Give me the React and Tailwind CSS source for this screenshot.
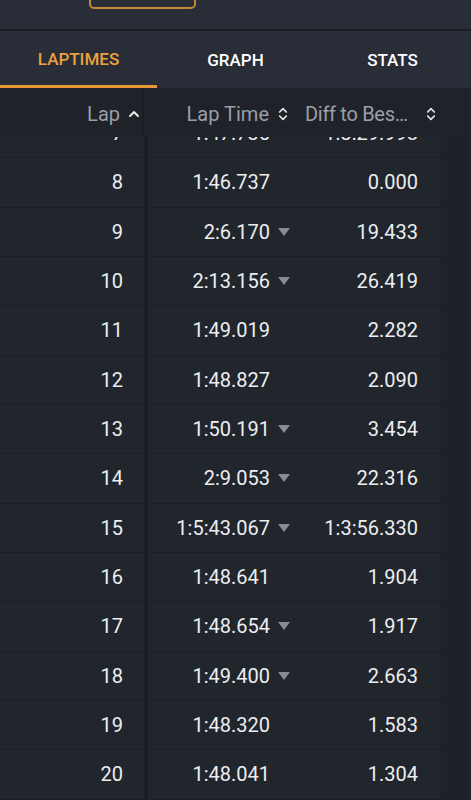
import { ChevronUp, ChevronsUpDown } from 'lucide-react';

const laps = [
  { lap: 7, time: '1:47.735', diff: '1:3:29.998' },
  { lap: 8, time: '1:46.737', diff: '0.000' },
  { lap: 9, time: '2:6.170', diff: '19.433', slower: true },
  { lap: 10, time: '2:13.156', diff: '26.419', slower: true },
  { lap: 11, time: '1:49.019', diff: '2.282' },
  { lap: 12, time: '1:48.827', diff: '2.090' },
  { lap: 13, time: '1:50.191', diff: '3.454', slower: true },
  { lap: 14, time: '2:9.053', diff: '22.316', slower: true },
  { lap: 15, time: '1:5:43.067', diff: '1:3:56.330', slower: true },
  { lap: 16, time: '1:48.641', diff: '1.904' },
  { lap: 17, time: '1:48.654', diff: '1.917', slower: true },
  { lap: 18, time: '1:49.400', diff: '2.663', slower: true },
  { lap: 19, time: '1:48.320', diff: '1.583' },
  { lap: 20, time: '1:48.041', diff: '1.304' },
  { lap: 21, time: '1:48.512', diff: '1.775' },
];

function Triangle() {
  return (
    <svg width="12" height="8" viewBox="0 0 12 8" className="ml-[8px]">
      <path d="M0 0 H12 L6 8 Z" fill="#878c93" />
    </svg>
  );
}

export default function App() {
  return (
    <div
      className="w-[471px] h-[800px] overflow-hidden bg-[#1e2127] flex flex-col"
      style={{ fontFamily: 'Roboto, "Noto Sans", sans-serif' }}
    >
      {/* top strip, button cut off above */}
      <div className="h-[29px] shrink-0 bg-[#282d37] overflow-hidden">
        <div className="ml-[89px] mt-[-31px] w-[107px] h-[40px] rounded-[5px] border-2 border-solid border-[#c48833]" />
      </div>
      <div className="h-[1.5px] shrink-0 bg-[#1a1d22]" />

      {/* tabs */}
      <div className="h-[57.5px] shrink-0 bg-[#282d37] flex">
        <div className="w-[157px] flex flex-col">
          <div className="flex-1 flex items-center justify-center pt-[3px] text-[17px] font-medium text-[#eda23c]">
            LAPTIMES
          </div>
          <div className="h-[3px] bg-[#e7993a]" />
        </div>
        <div className="w-[157px] flex items-center justify-center pt-[3px] text-[17px] font-medium text-white">
          GRAPH
        </div>
        <div className="w-[157px] flex items-center justify-center pt-[3px] text-[17px] font-medium text-white">
          STATS
        </div>
      </div>

      {/* header */}
      <div className="h-[49px] shrink-0 flex bg-[#1f2228] text-[20px] text-[#9a9fa7] relative z-10 pt-[2px]">
        <div className="w-[144px] flex items-center justify-end border-r-[2px] border-[#1a1d22]">
          <span>Lap</span>
          <span className="w-[22px] flex justify-end">
            <ChevronUp size={16} strokeWidth={3} color="#e6e6e6" />
          </span>
        </div>
        <div className="w-[151px] flex items-center justify-end">
          <span>Lap Time</span>
          <span className="w-[26px] flex justify-center pl-[1px]">
            <ChevronsUpDown size={16} strokeWidth={2.5} color="#e6e6e6" />
          </span>
        </div>
        <div className="w-[146px] flex items-center pl-[10px]">
          <span className="whitespace-nowrap tracking-[-0.3px]">Diff to Bes…</span>
          <span className="flex-1 flex justify-end pr-[2px]">
            <ChevronsUpDown size={16} strokeWidth={2.5} color="#e6e6e6" />
          </span>
        </div>
      </div>

      {/* body */}
      <div className="flex-1 overflow-hidden">
        <div className="mt-[-28px] flex flex-col">
          {laps.map((r) => (
            <div key={r.lap} className="h-[49.33px] shrink-0 flex text-[20px] text-[#eceef0]">
              <div className="w-[144px] bg-[#21252c] border-b-[1.5px] border-[#1a1d22] flex items-center justify-end pr-[21px]">
                {r.lap}
              </div>
              <div className="w-[4px] bg-[#1a1d22]" />
              <div className="w-[293px] bg-[#21252c] border-b-[1.5px] border-[#1a1d22] flex items-center">
                <div className="w-[147px] flex items-center justify-end">
                  <span>{r.time}</span>
                  <span className="w-[25px] flex items-center">{r.slower && <Triangle />}</span>
                </div>
                <div className="w-[146px] text-right pr-[23px]">{r.diff}</div>
              </div>
            </div>
          ))}
        </div>
      </div>
    </div>
  );
}
